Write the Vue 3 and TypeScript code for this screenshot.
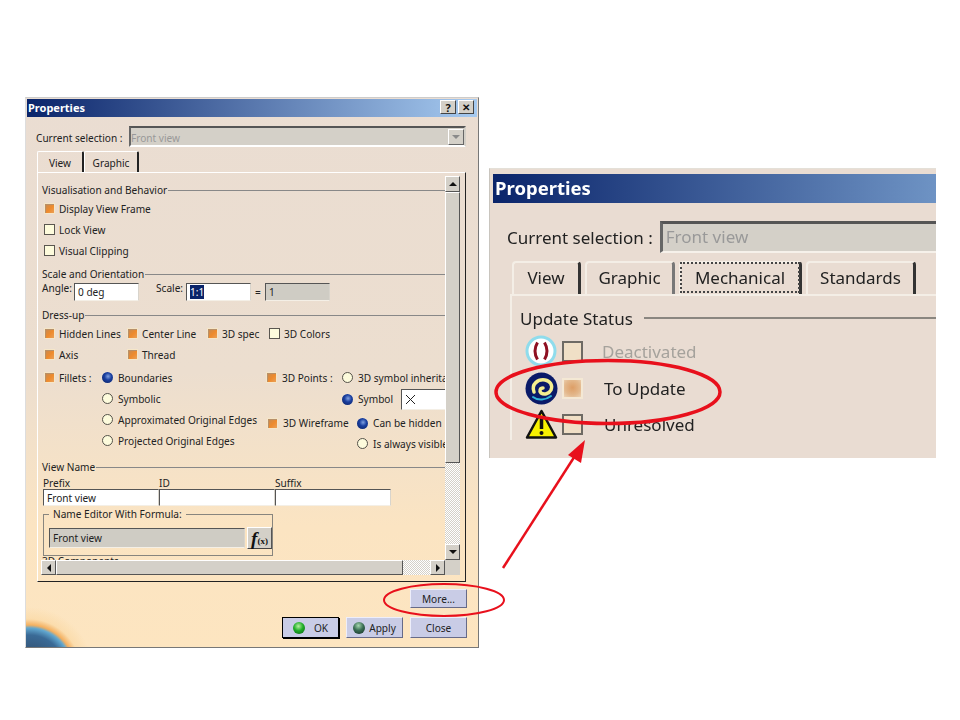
<script setup lang="ts">
const tabs = ['View', 'Graphic']
const fillets = [
  { label: 'Boundaries', on: true },
  { label: 'Symbolic', on: false },
  { label: 'Approximated Original Edges', on: false },
  { label: 'Projected Original Edges', on: false }
]
</script>

<template>
  <div class="slide">
    <div class="dialog">
      <div class="titlebar">
        <span>Properties</span>
        <div class="title-btns">
          <i class="tbtn">?</i>
          <i class="tbtn x">✕</i>
        </div>
      </div>

      <div class="selection">
        <span>Current selection :</span>
        <div class="combo">
          <span class="combo-text">Front view</span>
          <i class="combo-btn"><b class="tri down grey"></b></i>
        </div>
      </div>

      <div class="tabs">
        <div v-for="t in tabs" :key="t" class="tab" :class="{ active: t === 'View' }">{{ t }}</div>
      </div>

      <div class="panel">
        <div class="view-grid">
          <div class="viewport">
            <div class="sec first"><span>Visualisation and Behavior</span></div>
            <div class="row r0"><i class="chk on"></i>Display View Frame</div>
            <div class="row"><i class="chk"></i>Lock View</div>
            <div class="row"><i class="chk"></i>Visual Clipping</div>

            <div class="sec s2"><span>Scale and Orientation</span></div>
            <div class="scale-row">
              <span class="up angle-lbl">Angle:</span>
              <div class="input w65">0 deg</div>
              <span class="up scale-lbl">Scale:</span>
              <div class="input w65"><mark>1:1</mark></div>
              <span class="eq">=</span>
              <div class="input w65 grey">1</div>
            </div>

            <div class="sec s3"><span>Dress-up</span></div>
            <div class="row r1">
              <span class="c83"><i class="chk on"></i>Hidden Lines</span>
              <span class="c80"><i class="chk on"></i>Center Line</span>
              <span class="c62"><i class="chk on"></i>3D spec</span>
              <span><i class="chk"></i>3D Colors</span>
            </div>
            <div class="row">
              <span class="c83"><i class="chk on"></i>Axis</span>
              <span><i class="chk on"></i>Thread</span>
            </div>

            <div class="options">
              <div class="fillet-lbl"><i class="chk on"></i>Fillets :</div>
              <div class="fillet-list">
                <div v-for="f in fillets" :key="f.label" class="row">
                  <i class="radio" :class="{ on: f.on }"></i>{{ f.label }}
                </div>
              </div>
              <div class="right-opts">
                <div class="ro r-a">
                  <span class="pts"><i class="chk on"></i>3D Points :</span>
                  <i class="radio"></i>3D symbol inheritance
                </div>
                <div class="ro r-b">
                  <i class="radio on"></i>Symbol
                  <div class="input sym">
                    <svg width="11" height="11" viewBox="0 0 11 11"><path d="M1 1l9 9M10 1l-9 9" stroke="#222" fill="none" /></svg>
                  </div>
                </div>
                <div class="ro r-c">
                  <span class="wire"><i class="chk on"></i>3D Wireframe</span>
                  <i class="radio on"></i>Can be hidden
                </div>
                <div class="ro r-d"><i class="radio"></i>Is always visible</div>
              </div>
            </div>

            <div class="sec s4"><span>View Name</span></div>
            <div class="name-labels">
              <span>Prefix</span><span>ID</span><span>Suffix</span>
            </div>
            <div class="name-inputs">
              <div class="input w115">Front view</div>
              <div class="input w115"></div>
              <div class="input w115"></div>
            </div>
            <fieldset class="formula">
              <legend>Name Editor With Formula:</legend>
              <div class="input grey fx-field">Front view</div>
              <div class="fx-btn"><em>f</em><small>(x)</small></div>
            </fieldset>
            <div class="sec cut"><span>3D Components</span></div>
          </div>

          <div class="vscroll">
            <i class="sbtn"><b class="tri up-arrow"></b></i>
            <div class="vthumb"></div>
            <div class="dither"></div>
            <i class="sbtn"><b class="tri down"></b></i>
          </div>
          <div class="hscroll">
            <i class="sbtn"><b class="tri left"></b></i>
            <div class="hthumb"></div>
            <div class="dither"></div>
            <i class="sbtn"><b class="tri right"></b></i>
          </div>
          <div class="corner"></div>
        </div>
      </div>

      <div class="footer">
        <div class="more-row"><button class="btn more">More...</button></div>
        <div class="btn-row">
          <button class="btn ok"><i class="orb green"></i><span>OK</span></button>
          <button class="btn apply"><i class="orb dark"></i><span>Apply</span></button>
          <button class="btn close">Close</button>
        </div>
      </div>
      <div class="earth"></div>
    </div>

    <div class="inset">
      <div class="in-title"><span>Properties</span></div>
      <div class="in-sel">
        <span>Current selection :</span>
        <div class="in-combo">Front view</div>
      </div>
      <div class="in-tabs">
        <div class="in-tab t-view">View</div>
        <div class="in-tab t-graphic">Graphic</div>
        <div class="in-tab t-mech"><span>Mechanical</span></div>
        <div class="in-tab t-std">Standards</div>
      </div>
      <div class="in-panel">
        <div class="in-sec"><span>Update Status</span></div>
        <div class="in-row">
          <svg class="ico" width="33" height="33" viewBox="0 0 33 33">
            <circle cx="16" cy="16" r="14" fill="#fff" stroke="#8fdcec" stroke-width="3" />
            <path d="M12.5 7.5Q7.5 16 12.5 24.5M19.5 7.5Q24.5 16 19.5 24.5" fill="none" stroke="#8e1022" stroke-width="3" />
          </svg>
          <i class="in-chk"></i>
          <span class="t-dis">Deactivated</span>
        </div>
        <div class="in-row">
          <svg class="ico" width="33" height="33" viewBox="0 0 33 33">
            <circle cx="16.500" cy="16.500" r="16" fill="#0a1a68" />
            <path d="M9 20C6 12 13 7 20 8c5 .8 8 5 6 10-2 4-7 5-10 3-2-2-1-5 2-5" fill="none" stroke="#f4ee90" stroke-width="3.500" stroke-linecap="round" />
            <path d="M8 25c5 4 13 3 18-1" fill="none" stroke="#2fb4d8" stroke-width="2" stroke-linecap="round" />
          </svg>
          <i class="in-chk on"></i>
          <span class="t-upd">To Update</span>
        </div>
        <div class="in-row">
          <svg class="ico" width="33" height="33" viewBox="0 0 33 33">
            <path d="M16.500 3L31 29.500H2Z" fill="#f7f000" stroke="#111" stroke-width="2.500" stroke-linejoin="round" />
            <path d="M16.500 10v11" stroke="#111" stroke-width="3.500" />
            <circle cx="16.500" cy="25" r="2" fill="#111" />
          </svg>
          <i class="in-chk"></i>
          <span class="t-upd">Unresolved</span>
        </div>
      </div>
    </div>

    <svg class="marks" width="960" height="720" viewBox="0 0 960 720">
      <ellipse cx="444" cy="600" rx="60" ry="16" fill="none" stroke="#e8101c" stroke-width="2" />
      <ellipse cx="608" cy="392" rx="112" ry="31.500" fill="none" stroke="#e8101c" stroke-width="3.500" />
      <path d="M503 568L580 448" stroke="#e8101c" stroke-width="2.500" fill="none" />
      <path d="M585 440L581 463L568 455Z" fill="#e8101c" />
    </svg>
  </div>
</template>

<style>
html, body { margin: 0; background: #fff; }
</style>

<style scoped>
.slide {
  position: relative;
  width: 960px;
  height: 720px;
  overflow: hidden;
  background: #fff;
  font-family: "Noto Sans", sans-serif;
  font-size: 10.100px;
  color: #222;
}

/* dialog window */
.dialog {
  position: absolute;
  left: 25px;
  top: 97px;
  width: 454px;
  height: 551px;
  box-sizing: border-box;
  border: 1px solid #777;
  border-top-color: #ccc;
  border-left-color: #ddd;
  padding: 1px;
  background: linear-gradient(#eaddd2 0, #ecdecf 50%, #fbe4c2 78%, #fde5c0 100%);
  overflow: hidden;
}
.titlebar {
  height: 18px;
  padding: 0 3px 2px 1px;
  box-sizing: border-box;
  display: flex;
  align-items: center;
  justify-content: space-between;
  background: linear-gradient(90deg, #0a246a, #a6caf0);
  color: #fff;
  font-weight: 700;
  font-size: 11px;
}
.title-btns { display: flex; gap: 2px; }
.tbtn {
  width: 16px;
  height: 14px;
  box-sizing: border-box;
  background: #d4d0c8;
  border: 1px solid;
  border-color: #fff #444 #444 #fff;
  display: flex;
  align-items: center;
  justify-content: center;
  font-style: normal;
  font-size: 11px;
  line-height: 1;
  color: #111;
}
.tbtn.x { font-size: 10px; }

.selection {
  margin: 9px 0 0 9px;
  height: 21px;
  display: flex;
  align-items: center;
  white-space: nowrap;
}
.selection > span { position: relative; top: 1px; }
.combo {
  width: 337px;
  height: 21px;
  box-sizing: border-box;
  margin-left: auto;
  margin-right: 11px;
  background: #d4d0c8;
  border: 2px solid;
  border-color: #555 #d4d0c8 #fff #666;
  display: flex;
  align-items: center;
  justify-content: space-between;
  color: #999;
}
.combo-text { position: relative; top: 1px; }
.combo-btn {
  width: 16px;
  height: 16px;
  box-sizing: border-box;
  border: 1px solid;
  border-color: #fff #666 #666 #fff;
  display: flex;
  align-items: center;
  justify-content: center;
}

.tabs {
  display: flex;
  margin: 4px 0 0 10px;
  height: 21px;
}
.tab {
  box-sizing: border-box;
  height: 21px;
  padding-top: 2px;
  display: flex;
  align-items: center;
  justify-content: center;
  border-top: 1px solid #fff;
  border-left: 1px solid #fff;
  border-right: 2px solid #222;
  border-radius: 2px 2px 0 0;
  width: 55px;
}
.tab.active { width: 47px; border-bottom: 0; }

.panel {
  box-sizing: border-box;
  margin: 0 0 0 10px;
  width: 429px;
  height: 410px;
  padding: 3px 5px 6px 3px;
  border: 1px solid #fff;
  border-right: 1px solid #222;
  border-bottom: 1px solid #222;
}
.view-grid {
  display: grid;
  grid-template-columns: 404px 15px;
  grid-template-rows: 384px 15px;
}
.viewport {
  position: relative;
  overflow: hidden;
  white-space: nowrap;
}

.sec {
  height: 14px;
  padding-left: 1px;
  display: flex;
  align-items: center;
  gap: 1px;
}
.sec::after {
  content: '';
  flex: 1;
  height: 1px;
  background: #888;
}
.sec.first { margin-top: 7px; }
.sec.s2 { margin-top: 6px; }
.sec.s3 { margin-top: 6px; }
.sec.s4 { margin-top: 4px; }
.sec.cut { margin-top: -2px; }

.row {
  height: 21px;
  display: flex;
  align-items: center;
  padding-left: 3px;
}
.row.r0 { margin-top: 1px; }
.row.r1 { margin-top: 1px; }
.row > span { display: flex; align-items: center; }
.c83 { width: 83px; }
.c80 { width: 80px; }
.c62 { width: 62px; }

.chk {
  flex: none;
  width: 11px;
  height: 11px;
  box-sizing: border-box;
  margin-right: 4px;
  background: #fdfbdc;
  border: 1px solid #5a5650;
}
.chk.on {
  border: 1px solid #f6e6c8;
  background: linear-gradient(135deg, #c08a58 0, #ee8a2c 55%, #eaa058 100%);
  box-shadow: inset 1px 1px 0 #b89068;
}
.radio {
  flex: none;
  width: 11px;
  height: 11px;
  box-sizing: border-box;
  border-radius: 50%;
  margin-right: 5px;
  background: #fdfbdc;
  border: 1px solid #55524a;
}
.radio.on {
  border: 0;
  background: radial-gradient(circle at 55% 40%, #7fa0e0 0, #1a3fa0 40%, #0a1f5c 100%);
  box-shadow: 0 0 1px #fff;
}

.scale-row {
  height: 21px;
  display: flex;
  align-items: center;
  padding-left: 1px;
}
.up { position: relative; top: -4px; }
.angle-lbl { width: 32px; }
.scale-lbl { margin-left: 17px; width: 30px; }
.eq { width: 14px; text-align: center; }
.input {
  flex: none;
  height: 18px;
  box-sizing: border-box;
  background: #fff;
  border: 1px solid;
  border-color: #555 #d8d4cc #f4efe6 #555;
  display: flex;
  align-items: center;
  padding-left: 3px;
  color: #222;
}
.input.grey { background: #cfccc4; }
.w65 { width: 65px; }
.w115 { width: 116px; height: 17px; }
mark { background: #0a246a; color: #fff; }

.options {
  display: flex;
  height: 89px;
  margin-top: 2px;
}
.fillet-lbl {
  flex: none;
  width: 61px;
  height: 21px;
  padding-left: 3px;
  box-sizing: border-box;
  display: flex;
  align-items: center;
}
.fillet-list { flex: none; width: 164px; }
.fillet-list .row { padding-left: 0; }
.right-opts { flex: none; width: 240px; }
.ro { display: flex; align-items: center; }
.r-a { height: 21px; }
.pts { flex: none; width: 76px; display: flex; align-items: center; }
.pts .chk { margin-right: 5px; }
.r-b { height: 22px; padding-left: 76px; }
.sym { width: 46px; height: 21px; margin-left: 8px; }
.r-c { height: 24px; padding: 2px 0 0 1px; box-sizing: border-box; }
.wire { flex: none; width: 90px; display: flex; align-items: center; }
.wire .chk { margin-right: 5px; }
.r-d { height: 19px; padding-left: 91px; }

.name-labels {
  display: flex;
  height: 12px;
  line-height: 12px;
  margin-top: 3px;
  padding-left: 2px;
}
.name-labels span { width: 116px; }
.name-inputs {
  display: flex;
  padding-left: 2px;
  margin-bottom: 3px;
}
.formula {
  box-sizing: border-box;
  width: 230px;
  height: 48px;
  margin: -1px 0 0 2px;
  padding: 8px 1px 0 5px;
  border: 1px solid #88857e;
  display: flex;
  align-items: flex-start;
  gap: 2px;
  min-width: 0;
}
.formula legend {
  padding: 0 4px;
  margin-left: 0;
  line-height: 12px;
}
.fx-field { width: 196px; height: 20px; }
.fx-btn {
  flex: none;
  width: 25px;
  height: 22px;
  box-sizing: border-box;
  margin-top: -1px;
  border: 1px solid;
  border-color: #fff #555 #444 #fff;
  background: #d4d0c8;
  font-family: "Liberation Serif", serif;
  font-weight: 700;
  color: #111;
  display: flex;
  align-items: center;
  justify-content: center;
}
.fx-btn em { font-size: 19px; line-height: 1; }
.fx-btn small { font-size: 9px; margin-top: 6px; }

/* scrollbars */
.vscroll, .hscroll { display: flex; background: #d4d0c8; }
.vscroll { flex-direction: column; }
.sbtn {
  flex: none;
  width: 15px;
  height: 16px;
  box-sizing: border-box;
  background: #d4d0c8;
  border: 1px solid;
  border-color: #fff #555 #555 #fff;
  display: flex;
  align-items: center;
  justify-content: center;
}
.hscroll .sbtn { height: 15px; }
.vthumb {
  height: 271px;
  box-sizing: border-box;
  background: #d4d0c8;
  border: 1px solid;
  border-color: #fff #555 #555 #fff;
}
.hthumb {
  width: 347px;
  box-sizing: border-box;
  background: #d4d0c8;
  border: 1px solid;
  border-color: #fff #555 #555 #fff;
}
.dither {
  flex: 1;
  background: repeating-conic-gradient(#d4d0c8 0 25%, #fff 0 50%) 0 0 / 2px 2px;
}
.corner { background: #d4d0c8; }
.tri { width: 0; height: 0; border: 4px solid transparent; }
.tri.up-arrow { border-top: 0; border-bottom-color: #111; }
.tri.down { border-bottom: 0; border-top-color: #111; }
.tri.down.grey { border-top-color: #8a8a8a; }
.tri.left { border-left: 0; border-right-color: #111; }
.tri.right { border-right: 0; border-left-color: #111; }

/* buttons */
.footer { padding: 7px 10px 0 0; }
.more-row { display: flex; justify-content: flex-end; }
.btn-row {
  display: flex;
  justify-content: flex-end;
  gap: 7px;
  margin-top: 9px;
}
.btn {
  font: inherit;
  color: #222;
  padding: 0;
  box-sizing: border-box;
  width: 57px;
  height: 21px;
  background: #c9cce6;
  border: 1px solid;
  border-color: #eeeefa #666a88 #666a88 #eeeefa;
  display: flex;
  align-items: center;
  justify-content: center;
  gap: 4px;
}
.btn.more { height: 19px; }
.btn.ok { border: 1px solid #000; box-shadow: 1px 1px 0 #000; gap: 9px; }
.orb {
  width: 12px;
  height: 12px;
  border-radius: 50%;
}
.orb.green { background: radial-gradient(circle at 45% 35%, #b8f0a0 0, #1fae28 45%, #0c5c14 100%); }
.orb.dark { background: radial-gradient(circle at 45% 30%, #a6d8b0 0, #3a6e54 45%, #122a24 100%); }

.earth {
  position: absolute;
  left: 0;
  bottom: 0;
  width: 70px;
  height: 44px;
  overflow: hidden;
  background: radial-gradient(circle at 3px 68px, #2c3a50 0, #3a6a96 36px, #62a8d0 43px, #f4b060 46px, rgba(250, 215, 160, 0.6) 52px, rgba(253, 229, 192, 0) 64px);
}

/* zoomed inset */
.inset {
  position: absolute;
  left: 489px;
  top: 168px;
  width: 447px;
  height: 290px;
  box-sizing: border-box;
  padding: 5px 0 0 3px;
  background: #e9dcd2;
  border-left: 1px solid #c9c5be;
  border-top: 1px solid #e4e0d8;
  overflow: hidden;
  font-size: 17px;
  white-space: nowrap;
  filter: blur(0.4px);
}
.in-title {
  height: 29px;
  line-height: 27px;
  padding-left: 2px;
  background: linear-gradient(90deg, #0a246a, #6e93c4);
  color: #fff;
  font-weight: 700;
  font-size: 18.500px;
}
.in-sel {
  display: flex;
  align-items: center;
  height: 32px;
  margin-top: 18px;
  padding-left: 14px;
  gap: 7px;
}
.in-combo {
  flex: 1;
  height: 32px;
  box-sizing: border-box;
  line-height: 26px;
  padding-left: 3px;
  background: #d4d0c8;
  border-top: 3px solid #555;
  border-left: 3px solid #666;
  border-bottom: 2px solid #f6f1ea;
  color: #999;
}
.in-tabs {
  display: flex;
  height: 33px;
  margin: 8px 0 0 19px;
}
.in-tab {
  box-sizing: border-box;
  padding-bottom: 2px;
  display: flex;
  align-items: center;
  justify-content: center;
  border-top: 2px solid #f4eee6;
  border-left: 2px solid #f4eee6;
  border-right: 3px solid #333;
  border-radius: 4px 4px 0 0;
  margin-right: 4px;
}
.t-view { width: 69px; }
.t-graphic { width: 90px; border-right-color: #777; }
.t-mech { width: 123px; }
.t-mech span {
  border: 2px dotted #444;
  padding: 2px 13px;
  margin: 0 -2px;
}
.t-std { width: 110px; }
.in-panel {
  height: 132px;
  margin-left: 17px;
  border-top: 2px solid #f4eee6;
  border-left: 2px solid #f4eee6;
  padding: 12px 0 0 8px;
}
.in-sec {
  display: flex;
  align-items: center;
  gap: 11px;
  height: 20px;
  margin-bottom: 5.500px;
}
.in-sec::after {
  content: '';
  flex: 1;
  height: 2px;
  background: #8a8680;
}
.in-row {
  display: flex;
  align-items: center;
  height: 36.500px;
  padding-left: 5px;
}
.ico { flex: none; margin-right: 4px; }
.in-chk {
  flex: none;
  width: 21px;
  height: 21px;
  box-sizing: border-box;
  background: #f0dfc6;
  border: 2px solid #6e6a64;
}
.in-chk.on {
  border-color: #f4e8d4;
  background: radial-gradient(circle at 50% 45%, #dd9e66 0, #e3b88c 60%, #ecd3b6 100%);
}
.t-dis { margin-left: 19px; color: #a5a29c; }
.t-upd { margin-left: 21px; }

.marks {
  position: absolute;
  left: 0;
  top: 0;
  pointer-events: none;
}
</style>
